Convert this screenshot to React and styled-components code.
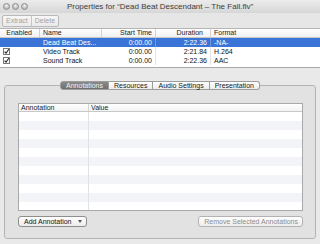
import React from "react";
import styled, { createGlobalStyle } from "styled-components";

const Global = createGlobalStyle`
  html, body { margin: 0; padding: 0; background: #e9e9e9; }
  body { font-family: "Liberation Sans", Arial, sans-serif; -webkit-font-smoothing: antialiased; }
  #root { width: 320px; height: 244px; }
  * { box-sizing: border-box; }
`;

const Window = styled.div`
  width: 320px;
  height: 244px;
  display: flex;
  flex-direction: column;
  background: #e9e9e9;
  overflow: hidden;
`;

const TitleBar = styled.div`
  height: 13px;
  display: grid;
  grid-template-columns: 1fr auto 1fr;
  align-items: center;
  background: linear-gradient(#ececec, #d6d6d6);
`;

const Lights = styled.div`
  display: flex;
  gap: 2px;
  padding-left: 3px;
`;

const Light = styled.span`
  width: 7px;
  height: 7px;
  border-radius: 50%;
  border: 1px solid #8f8f8f;
  background: radial-gradient(circle at 50% 35%, #f4f4f4, #b9b9b9 70%);
`;

const Title = styled.div`
  font-size: 8px;
  line-height: 13px;
  color: #404040;
  white-space: nowrap;
`;

const Toolbar = styled.div`
  height: 15px;
  display: flex;
  align-items: center;
  padding: 0 2px;
  background: #e6e6e6;
`;

const Segmented = styled.div`
  display: flex;
  height: 12px;
  border: 1px solid #b9b9b9;
  border-radius: 2px;
  background: linear-gradient(#f7f7f7, #eaeaea);
`;

const SegButton = styled.div`
  padding: 0 3px;
  font-size: 7px;
  line-height: 10px;
  color: #a2a2a2;
  & + & { border-left: 1px solid #c4c4c4; }
`;

const TrackTable = styled.div`
  height: 40px;
  background: #fff;
  border-top: 1px solid #b5b5b5;
  border-bottom: 1px solid #a9a9a9;
  overflow: hidden;
`;

const cols = "40px 62px 54px 55px 1fr";

const HeaderRow = styled.div`
  display: grid;
  grid-template-columns: ${cols};
  height: 9px;
  background: linear-gradient(#ffffff, #f1f1f1);
  border-bottom: 1px solid #c6c6c6;
  font-size: 7px;
  line-height: 8px;
  color: #222;
`;

const HeadCell = styled.div`
  padding: 0 ${(p) => (p.$pr != null ? p.$pr : 3)}px 0 ${(p) => (p.$pl != null ? p.$pl : 3)}px;
  text-align: ${(p) => p.$align || "left"};
  border-right: ${(p) => (p.$last ? "none" : "1px solid #d2d2d2")};
  white-space: nowrap;
  overflow: hidden;
`;

const Row = styled.div`
  display: grid;
  grid-template-columns: ${cols};
  height: 9px;
  font-size: 7px;
  line-height: 9px;
  background: ${(p) => (p.$selected ? "#3a74d7" : "#fff")};
  color: ${(p) => (p.$selected ? "#fff" : "#111")};
`;

const Cell = styled.div`
  padding: 0 3px;
  text-align: ${(p) => p.$align || "left"};
  border-right: ${(p) => (p.$line ? `1px solid ${p.$sel ? "#6f98e2" : "#e2e2e2"}` : "1px solid transparent")};
  white-space: nowrap;
  overflow: hidden;
  display: flex;
  align-items: center;
  justify-content: ${(p) => (p.$align === "right" ? "flex-end" : "flex-start")};
`;

const Pane = styled.div`
  flex: 1;
  display: flex;
  flex-direction: column;
  padding: 13px 4px 5px 4px;
`;

const TabRow = styled.div`
  display: flex;
  justify-content: center;
  margin-bottom: -5px;
  position: relative;
  z-index: 1;
`;

const Tab = styled.div`
  height: 9px;
  padding: 0 5px;
  font-size: 7px;
  line-height: 7px;
  border: 1px solid #9c9c9c;
  border-left-width: ${(p) => (p.$first ? 1 : 0)}px;
  border-radius: ${(p) => (p.$first ? "3px 0 0 3px" : p.$last ? "0 3px 3px 0" : "0")};
  background: ${(p) => (p.$active ? "linear-gradient(#8a8a8a, #6e6e6e)" : "linear-gradient(#ffffff, #ececec)")};
  color: ${(p) => (p.$active ? "#f4f4f4" : "#1a1a1a")};
  white-space: nowrap;
`;

const TabBox = styled.div`
  flex: 1;
  display: flex;
  flex-direction: column;
  border: 1px solid #b3b3b3;
  border-radius: 3px;
  background: #e2e2e2;
  padding: 17px 12px 11px 13px;
`;

const AnnoTable = styled.div`
  height: 108px;
  background: #fff;
  border: 1px solid #a9a9a9;
  display: flex;
  flex-direction: column;
  overflow: hidden;
`;

const annoCols = "70px 1fr";

const AnnoHeader = styled.div`
  display: grid;
  grid-template-columns: ${annoCols};
  height: 8px;
  flex: none;
  font-size: 7px;
  line-height: 7px;
  color: #1a1a1a;
  background: linear-gradient(#ffffff, #f3f3f3);
  border-bottom: 1px solid #c8c8c8;
`;

const AnnoHeadCell = styled.div`
  padding-left: 2px;
  border-right: ${(p) => (p.$last ? "none" : "1px solid #d4d4d4")};
`;

const AnnoRow = styled.div`
  display: grid;
  grid-template-columns: ${annoCols};
  height: 9px;
  flex: none;
  background: ${(p) => (p.$odd ? "#f2f4f7" : "#ffffff")};
`;

const AnnoCell = styled.div`
  border-right: ${(p) => (p.$last ? "none" : "1px solid #dfe2e6")};
`;

const ButtonRow = styled.div`
  display: flex;
  justify-content: space-between;
  margin-top: 5px;
`;

const Button = styled.div`
  height: 11px;
  display: flex;
  align-items: center;
  gap: 6px;
  padding: 0 4px 0 5px;
  font-size: 7px;
  color: ${(p) => (p.$disabled ? "#8c8c8c" : "#111")};
  border: 1px solid ${(p) => (p.$disabled ? "#b2b2b2" : "#8e8e8e")};
  border-radius: 3px;
  background: linear-gradient(#ffffff, #ececec);
  white-space: nowrap;
`;

const Arrow = styled.span`
  width: 0;
  height: 0;
  border-left: 2px solid transparent;
  border-right: 2px solid transparent;
  border-top: 3px solid #555;
`;

const Check = () => (
  <svg width="7" height="7" viewBox="0 0 7 7">
    <rect x="0.5" y="0.5" width="6" height="6" fill="#fff" stroke="#777" />
    <path d="M1.6 3.6 L3 5.2 L5.8 1.2" fill="none" stroke="#222" strokeWidth="1.1" />
  </svg>
);

const tracks = [
  { name: "Dead Beat Des...", start: "0:00.00", dur: "2:22.36", fmt: "-NA-", check: false, sel: true },
  { name: "Video Track", start: "0:00.00", dur: "2:21.84", fmt: "H.264", check: true },
  { name: "Sound Track", start: "0:00.00", dur: "2:22.36", fmt: "AAC", check: true },
];

const tabs = ["Annotations", "Resources", "Audio Settings", "Presentation"];

export default function App() {
  return (
    <>
      <Global />
      <Window>
        <TitleBar>
          <Lights>
            <Light />
            <Light />
            <Light />
          </Lights>
          <Title>Properties for “Dead Beat Descendant – The Fall.flv”</Title>
          <div />
        </TitleBar>
        <Toolbar>
          <Segmented>
            <SegButton>Extract</SegButton>
            <SegButton>Delete</SegButton>
          </Segmented>
        </Toolbar>
        <TrackTable>
          <HeaderRow>
            <HeadCell $align="right" $pr={7}>Enabled</HeadCell>
            <HeadCell>Name</HeadCell>
            <HeadCell $align="right">Start Time</HeadCell>
            <HeadCell $align="right" $pr={7}>Duration</HeadCell>
            <HeadCell $last>Format</HeadCell>
          </HeaderRow>
          {tracks.map((t) => (
            <Row key={t.name} $selected={t.sel}>
              <Cell>{t.check ? <Check /> : null}</Cell>
              <Cell>{t.name}</Cell>
              <Cell $align="right" $line $sel={t.sel}>{t.start}</Cell>
              <Cell $align="right" $line $sel={t.sel}>{t.dur}</Cell>
              <Cell>{t.fmt}</Cell>
            </Row>
          ))}
        </TrackTable>
        <Pane>
          <TabRow>
            {tabs.map((t, i) => (
              <Tab key={t} $active={i === 0} $first={i === 0} $last={i === tabs.length - 1}>
                {t}
              </Tab>
            ))}
          </TabRow>
          <TabBox>
            <AnnoTable>
              <AnnoHeader>
                <AnnoHeadCell>Annotation</AnnoHeadCell>
                <AnnoHeadCell $last>Value</AnnoHeadCell>
              </AnnoHeader>
              {Array.from({ length: 12 }).map((_, i) => (
                <AnnoRow key={i} $odd={i % 2 === 1}>
                  <AnnoCell />
                  <AnnoCell $last />
                </AnnoRow>
              ))}
            </AnnoTable>
            <ButtonRow>
              <Button>
                Add Annotation
                <Arrow />
              </Button>
              <Button $disabled>Remove Selected Annotations</Button>
            </ButtonRow>
          </TabBox>
        </Pane>
      </Window>
    </>
  );
}
